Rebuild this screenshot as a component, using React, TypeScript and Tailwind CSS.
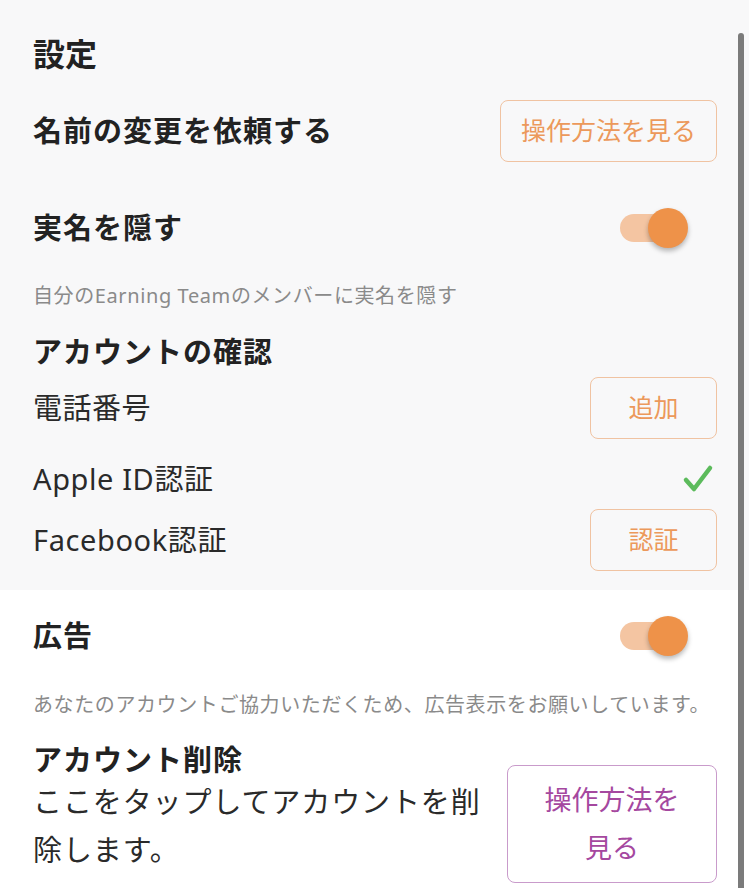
import React from "react";

const font = { fontFamily: '"Noto Sans", "Noto Sans CJK JP", sans-serif' };

function Toggle() {
  return (
    <div className="relative w-[70px] h-[40px] mr-[27px]">
      <div className="absolute left-0 top-[6px] w-[58px] h-[28px] rounded-full bg-[#f4c5a2]" />
      <div className="absolute left-[28px] top-0 w-[40px] h-[40px] rounded-full bg-[#ee9249] shadow-[0_3px_5px_rgba(0,0,0,0.28)]" />
    </div>
  );
}

function OrangeButton({ label, w }: { label: string; w: string }) {
  return (
    <div
      className={`${w} h-[62px] rounded-[8px] border-[1.5px] border-[#f0c3a2] flex items-center justify-center text-[25px] text-[#ec995b]`}
    >
      {label}
    </div>
  );
}

export default function App() {
  return (
    <div style={font} className="relative w-[749px] h-[888px] overflow-hidden bg-white">
      <div className="bg-[#f8f8f9] h-[590px] pl-[33px] pr-[32px] pt-[30px] flex flex-col">
        <div className="h-[48px] flex items-center text-[32px] font-bold text-[#222]">設定</div>
        <div className="mt-[22px] h-[62px] flex items-center justify-between">
          <div className="text-[29px] font-bold text-[#222] tracking-[1px]">名前の変更を依頼する</div>
          <OrangeButton label="操作方法を見る" w="w-[217px]" />
        </div>
        <div className="mt-[41px] h-[50px] flex items-center justify-between">
          <div className="text-[29px] font-bold text-[#222] tracking-[1px]">実名を隠す</div>
          <Toggle />
        </div>
        <div className="mt-[31px] h-[24px] flex items-center text-[20px] text-[#8a8a8a] tracking-[0.6px]">
          自分のEarning Teamのメンバーに実名を隠す
        </div>
        <div className="mt-[26px] h-[36px] flex items-center text-[29px] font-bold text-[#222] tracking-[1px]">
          アカウントの確認
        </div>
        <div className="mt-[7px] h-[62px] flex items-center justify-between">
          <div className="text-[29px] text-[#2a2a2a] tracking-[0.5px]">電話番号</div>
          <OrangeButton label="追加" w="w-[127px]" />
        </div>
        <div className="mt-[20px] h-[40px] flex items-center justify-between">
          <div className="text-[29px] text-[#2a2a2a] tracking-[0.6px]">Apple ID認証</div>
          <svg width="32" height="30" viewBox="0 0 32 30" className="mr-[3px]">
            <path d="M4 16 L12 25 L28 4" fill="none" stroke="#5cbb5c" strokeWidth="4.5" strokeLinecap="round" strokeLinejoin="round" />
          </svg>
        </div>
        <div className="mt-[10px] h-[62px] flex items-center justify-between">
          <div className="text-[29px] text-[#2a2a2a] tracking-[0.6px]">Facebook認証</div>
          <OrangeButton label="認証" w="w-[127px]" />
        </div>
      </div>
      <div className="pl-[33px] pr-[32px] pt-[21px] flex flex-col">
        <div className="h-[50px] flex items-center justify-between">
          <div className="text-[29px] font-bold text-[#222] tracking-[1px]">広告</div>
          <Toggle />
        </div>
        <div className="mt-[32px] h-[24px] flex items-center text-[20px] text-[#8a8a8a] tracking-[0.6px] whitespace-nowrap">
          あなたのアカウントご協力いただくため、広告表示をお願いしています。
        </div>
        <div className="mt-[25px] flex items-start justify-between">
          <div className="w-[460px]">
            <div className="h-[36px] flex items-center text-[29px] font-bold text-[#222] tracking-[1px]">アカウント削除</div>
            <div className="text-[29px] leading-[48px] text-[#2a2a2a] tracking-[0.9px]">
              ここをタップしてアカウントを削除します。
            </div>
          </div>
          <div className="mt-[23px] w-[210px] h-[118px] rounded-[8px] border-[1.5px] border-[#c99bcb] flex items-center justify-center text-center text-[27px] leading-[48px] text-[#a5489f] px-[30px]">
            操作方法を見る
          </div>
        </div>
      </div>
      <div className="absolute left-[738px] top-[33px] w-[6px] h-[860px] rounded-full bg-[#7b7b7b]" />
    </div>
  );
}
